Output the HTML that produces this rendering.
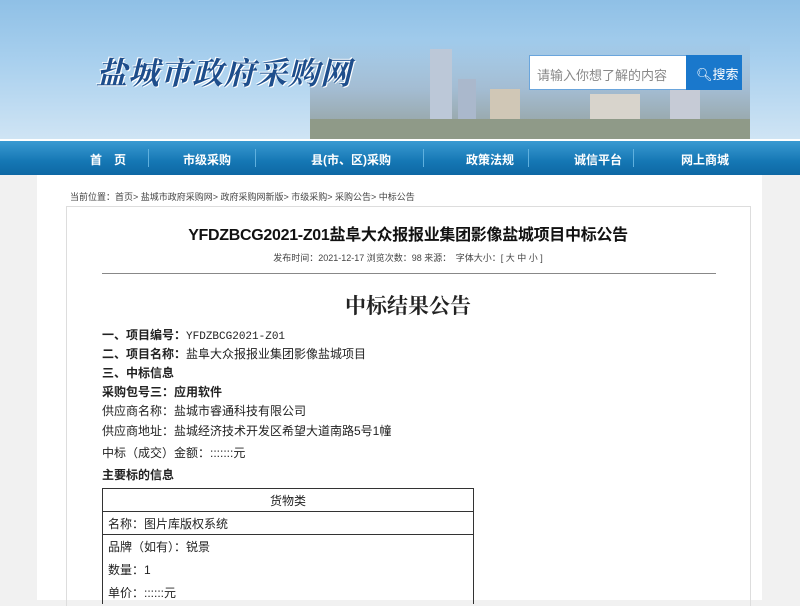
<!DOCTYPE html>
<html><head><meta charset="utf-8"><style>
*{margin:0;padding:0;box-sizing:border-box}
body{width:800px;height:600px;overflow:hidden;background:#f1f1f1;font-family:"Liberation Sans","Noto Sans CJK SC",sans-serif;position:relative}
.hdr{position:absolute;left:0;top:0;width:800px;height:139px;background:linear-gradient(180deg,#8fc0e6 0%,#a9d0ee 45%,#cfe4f4 100%)}
.city{position:absolute;left:310px;top:40px;width:440px;height:99px;background:linear-gradient(180deg,rgba(150,180,210,0) 0%,rgba(150,170,190,.6) 50%,rgba(130,140,130,.8) 100%)}
.b{position:absolute;bottom:0;background:#c9d3de}
.logo{position:absolute;left:96px;top:48px;font-family:"Noto Serif CJK SC",serif;font-size:31px;font-weight:bold;font-style:italic;color:#1e4e8c;letter-spacing:1px;text-shadow:1px 1px 0 #fff,-1px -1px 0 #fff}
.sbox{position:absolute;left:529px;top:55px;width:158px;height:35px;background:#fff;border:1px solid #6aa5dc;font-size:13px;color:#888;padding:9px 7px}
.sbtn{position:absolute;left:686px;top:55px;width:56px;height:35px;background:#1a78cc;color:#fff;font-size:13px;padding:9px 0 0 10px}
.nav{position:absolute;left:0;top:141px;width:800px;height:34px;background:linear-gradient(180deg,#3a9ad2,#1577b4 60%,#0e68a4)}
.nav span{position:absolute;top:10px;font-size:12px;color:#fff;font-weight:bold}
.nav i{position:absolute;top:8px;width:1px;height:18px;background:#5fb0de}
.main{position:absolute;left:37px;top:175px;width:725px;height:425px;background:#fff}
.crumb{position:absolute;left:70px;top:190px;font-size:9px;color:#444}
.box{position:absolute;left:66px;top:206px;width:685px;height:400px;border:1px solid #ddd;border-bottom:none}
.t{position:absolute;left:0;width:800px;text-align:center}
.c{position:absolute;left:102px;font-size:12px;color:#222;white-space:nowrap}
.bd{font-weight:bold}
table{position:absolute;left:102px;top:488px;width:372px;border-collapse:collapse;font-size:12px;color:#222}
td{border:1px solid #333;height:23px;padding-left:5px}
</style></head><body>
<div class="hdr">
<div class="city">
<div class="b" style="left:120px;width:22px;height:90px;background:#bcc8d8"></div>
<div class="b" style="left:148px;width:18px;height:60px;background:#aab8cc"></div>
<div class="b" style="left:180px;width:30px;height:50px;background:#d0c7b6"></div>
<div class="b" style="left:280px;width:50px;height:45px;background:#d8d4cc"></div>
<div class="b" style="left:360px;width:30px;height:60px;background:#c6cbd6"></div>
<div class="b" style="left:0;width:440px;height:20px;background:#8f9a88"></div>
</div>
<div class="logo">盐城市政府采购网</div>
</div>
<div style="position:absolute;left:0;top:139px;width:800px;height:2px;background:#fff"></div>
<div class="sbox">请输入你想了解的内容</div>
<div class="sbtn">&#x1F50D;&#xFE0E;搜索</div>
<div class="nav">
<span style="left:90px">首　页</span><i style="left:148px"></i>
<span style="left:183px">市级采购</span><i style="left:255px"></i>
<span style="left:311px">县(市、区)采购</span><i style="left:423px"></i>
<span style="left:466px">政策法规</span><i style="left:528px"></i>
<span style="left:574px">诚信平台</span><i style="left:633px"></i>
<span style="left:681px">网上商城</span>
</div>
<div class="main"></div>
<div class="crumb">当前位置：首页&gt; 盐城市政府采购网&gt; 政府采购网新版&gt; 市级采购&gt; 采购公告&gt; 中标公告</div>
<div class="box"></div>
<div class="t" style="top:221px;font-size:16px;font-weight:bold;color:#111;left:8px;letter-spacing:-0.3px">YFDZBCG2021-Z01盐阜大众报报业集团影像盐城项目中标公告</div>
<div class="t" style="top:251px;font-size:9px;color:#444;left:8px">发布时间：2021-12-17 浏览次数：98 来源：　字体大小：[ 大 中 小 ]</div>
<div style="position:absolute;left:102px;top:273px;width:614px;height:1px;background:#888"></div>
<div class="t" style="top:290px;font-size:21px;font-weight:bold;color:#222;left:8px;font-family:'Noto Serif CJK SC',serif">中标结果公告</div>
<div class="c bd" style="top:326px">一、项目编号：<span style="font-weight:normal;font-family:'Liberation Mono';font-size:11px">YFDZBCG2021-Z01</span></div>
<div class="c bd" style="top:345px">二、项目名称：<span style="font-weight:normal">盐阜大众报报业集团影像盐城项目</span></div>
<div class="c bd" style="top:364px">三、中标信息</div>
<div class="c bd" style="top:383px">采购包号三：应用软件</div>
<div class="c" style="top:402px">供应商名称：盐城市睿通科技有限公司</div>
<div class="c" style="top:422px">供应商地址：盐城经济技术开发区希望大道南路5号1幢</div>
<div class="c" style="top:444px">中标（成交）金额：:::::::元</div>
<div class="c bd" style="top:466px">主要标的信息</div>
<table>
<tr><td style="text-align:center;padding:0">货物类</td></tr>
<tr><td>名称：图片库版权系统</td></tr>
<tr><td style="border-bottom:none;border-top:none">品牌（如有）：锐景</td></tr>
<tr><td style="border-bottom:none;border-top:none">数量：1</td></tr>
<tr><td style="border-bottom:none;border-top:none">单价：::::::元</td></tr>
</table>
</body></html>
